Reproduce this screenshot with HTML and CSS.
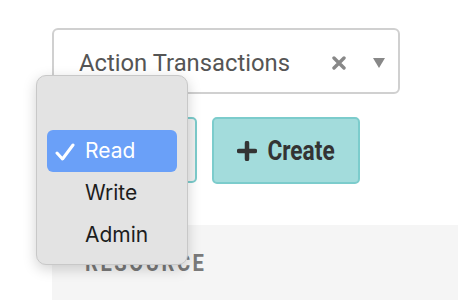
FILE: index.html
```html
<!DOCTYPE html>
<html lang="en">
<head>
    <meta charset="UTF-8">
    <title>Permissions</title>
    <link rel="stylesheet" href="styles.css">
</head>
<body>
    <div class="page">
        <div class="select-box">
            <span class="select-value">Action Transactions</span>
            <svg class="select-clear" width="14" height="14" viewBox="0 0 14 14">
                <path d="M2 2 L12 12 M12 2 L2 12" stroke="#888" stroke-width="3.4" stroke-linecap="round"/>
            </svg>
            <span class="select-arrow"></span>
        </div>
        <div class="action-row">
            <div class="level-select">
                <span class="level-caret"></span>
            </div>
            <button class="create-button">
                <svg class="plus" width="20" height="20" viewBox="0 0 20 20">
                    <path d="M10 2 V18 M2 10 H18" stroke="#333" stroke-width="4.5" stroke-linecap="round"/>
                </svg>
                <span class="create-label">Create</span>
            </button>
        </div>
        <div class="resource-panel">
            <span class="resource-title">RESOURCE</span>
        </div>
    </div>

    <!-- native select popup -->
    <div class="popup">
        <div class="popup-item selected">
            <svg class="check" width="20" height="18" viewBox="0 0 20 18">
                <path d="M2 10 L7.5 16 L18 2" stroke="#fff" stroke-width="3" fill="none" stroke-linecap="round" stroke-linejoin="round"/>
            </svg>Read
        </div>
        <div class="popup-item">Write</div>
        <div class="popup-item">Admin</div>
    </div>
</body>
</html>
```

FILE: styles.css
```css
body {
    margin: 0;
    background-color: #fff;
    font-family: Roboto, 'Liberation Sans', sans-serif;
    color: #555;
    width: 458px;
    height: 308px;
    overflow: hidden;
    position: relative;
}
.page {
    padding: 28px 0 0 52px;
    display: flex;
    flex-direction: column;
}
.select-box {
    width: 348px;
    height: 66px;
    box-sizing: border-box;
    border: 2px solid #d0d0d0;
    border-radius: 6px;
    display: flex;
    align-items: center;
    padding: 3px 13px 0 25px;
}
.select-value {
    flex: 1;
    font-size: 23.8px;
    color: #555;
}
.select-clear {
    margin-right: 27px;
}
.select-arrow {
    width: 0;
    height: 0;
    border-left: 6px solid transparent;
    border-right: 6px solid transparent;
    border-top: 10px solid #888;
}
.action-row {
    display: flex;
    gap: 15px;
    margin-top: 23px;
}
.level-select {
    width: 145px;
    height: 66px;
    box-sizing: border-box;
    border: 2px solid #7ccccc;
    border-radius: 5px;
    background-color: #f0f0f0;
    display: flex;
    align-items: center;
    justify-content: flex-end;
    padding-right: 8px;
}
.level-caret {
    width: 2px;
    height: 2px;
    background-color: #444;
}
.create-button {
    width: 148px;
    height: 67px;
    border: 2px solid #7ccccc;
    border-radius: 5px;
    background-color: #a3dcdc;
    color: #333;
    font-family: Roboto, sans-serif;
    font-weight: bold;
    display: flex;
    align-items: center;
    justify-content: center;
    padding: 0;
}
.create-button .plus {
    margin-right: 10px;
}
.create-label {
    font-size: 27px;
    display: inline-block;
    transform: scaleX(0.84);
    margin: 0 -6px;
}
.resource-panel {
    margin-top: 41px;
    height: 75px;
    background-color: #f5f5f5;
    padding: 24px 0 0 33px;
    box-sizing: border-box;
}
.resource-title {
    display: inline-block;
    font-size: 24px;
    font-weight: bold;
    letter-spacing: 3px;
    color: #7a7a7a;
    transform: scaleX(0.84);
    transform-origin: left center;
}

/* 팝업 */
.popup {
    position: absolute;
    left: 36px;
    top: 75px;
    width: 152px;
    height: 190px;
    box-sizing: border-box;
    background-color: #e3e3e3;
    border: 1px solid #c8c8c8;
    border-radius: 10px;
    box-shadow: 0 4px 14px rgba(0, 0, 0, 0.18);
    padding: 54px 10px 0 10px;
    font-family: Inter, 'Open Sans', sans-serif;
}
.popup-item {
    height: 42px;
    line-height: 42px;
    padding-left: 38px;
    font-size: 21px;
    color: #1d1d1d;
    border-radius: 6px;
    position: relative;
}
.popup-item.selected {
    background-color: #6aa0f8;
    color: #fff;
}
.check {
    position: absolute;
    left: 8px;
    top: 13px;
}
```
